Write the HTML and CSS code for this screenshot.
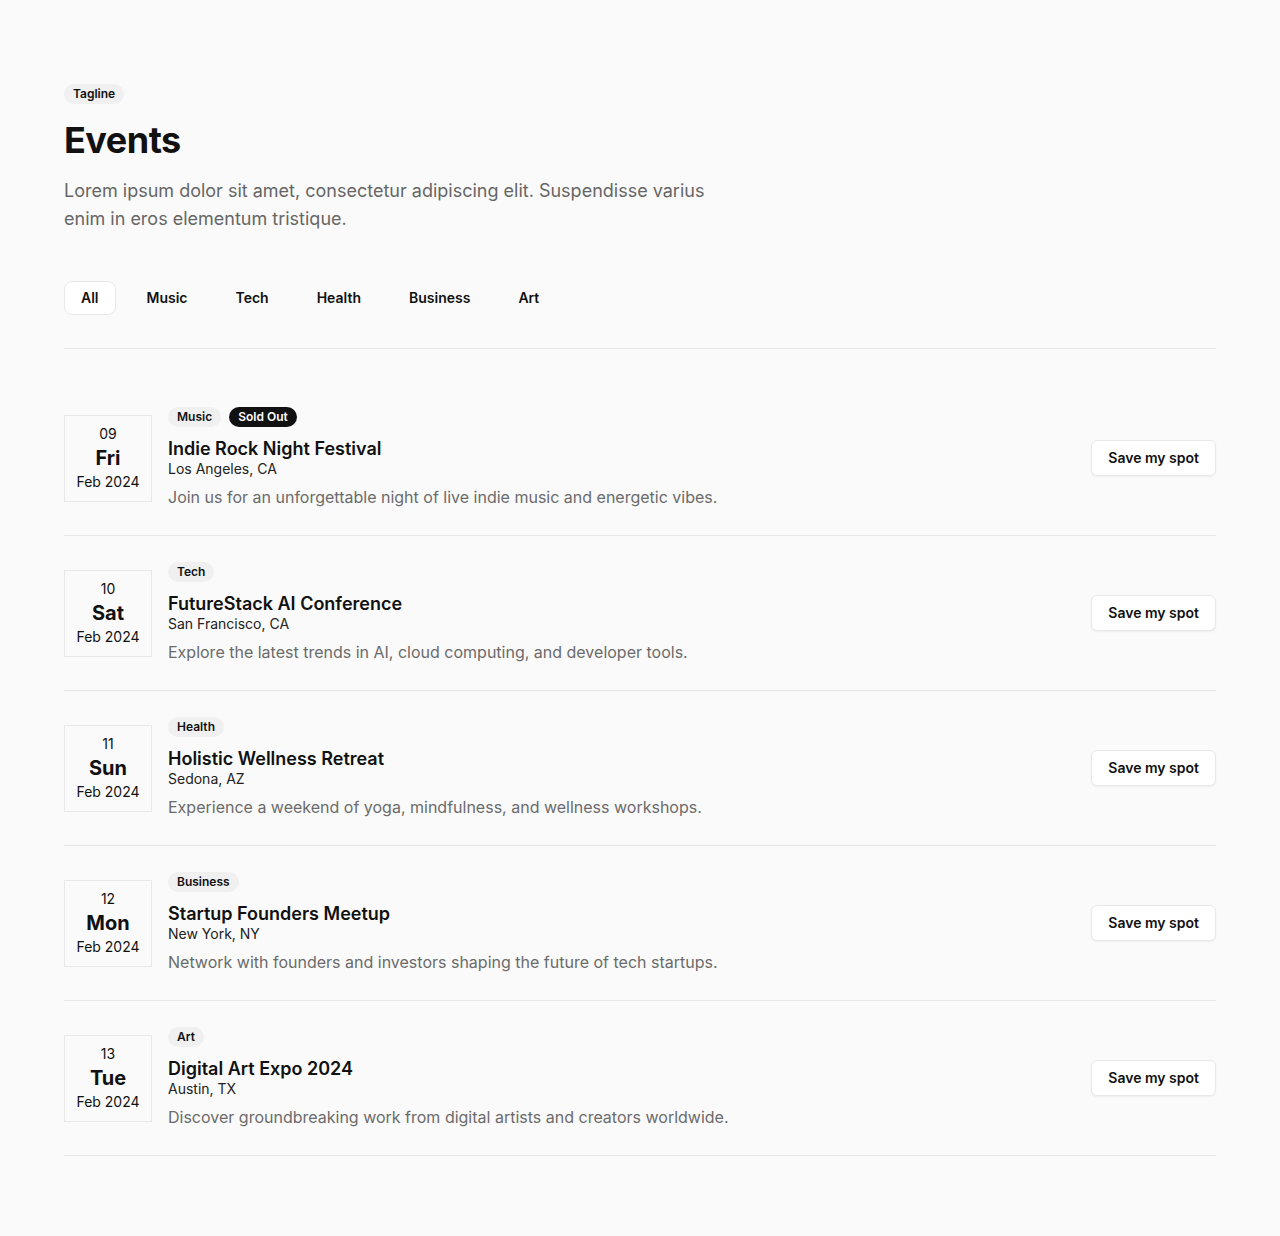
FILE: index.html
```html
<!DOCTYPE html>
<html>
    <head>
        <meta charset="utf-8">
        <link rel="stylesheet" href="styles.css">
    </head>
    <body>
        <section class="events">
            <header class="intro">
                <span class="tag">Tagline</span>
                <h1>Events</h1>
                <p>Lorem ipsum dolor sit amet, consectetur adipiscing elit. Suspendisse varius enim in eros elementum tristique.</p>
            </header>

            <nav class="tabs">
                <button class="tab active">All</button>
                <button class="tab">Music</button>
                <button class="tab">Tech</button>
                <button class="tab">Health</button>
                <button class="tab">Business</button>
                <button class="tab">Art</button>
            </nav>

            <div class="list">
                <div class="event">
                    <div class="date">
                        <span class="num">09</span>
                        <span class="day">Fri</span>
                        <span class="month">Feb 2024</span>
                    </div>
                    <div class="info">
                        <div class="badges">
                            <span class="tag">Music</span>
                            <span class="tag dark">Sold Out</span>
                        </div>
                        <h3>Indie Rock Night Festival</h3>
                        <div class="place">Los Angeles, CA</div>
                        <p>Join us for an unforgettable night of live indie music and energetic vibes.</p>
                    </div>
                    <button class="save">Save my spot</button>
                </div>

                <div class="event">
                    <div class="date">
                        <span class="num">10</span>
                        <span class="day">Sat</span>
                        <span class="month">Feb 2024</span>
                    </div>
                    <div class="info">
                        <div class="badges">
                            <span class="tag">Tech</span>
                        </div>
                        <h3>FutureStack AI Conference</h3>
                        <div class="place">San Francisco, CA</div>
                        <p>Explore the latest trends in AI, cloud computing, and developer tools.</p>
                    </div>
                    <button class="save">Save my spot</button>
                </div>

                <div class="event">
                    <div class="date">
                        <span class="num">11</span>
                        <span class="day">Sun</span>
                        <span class="month">Feb 2024</span>
                    </div>
                    <div class="info">
                        <div class="badges">
                            <span class="tag">Health</span>
                        </div>
                        <h3>Holistic Wellness Retreat</h3>
                        <div class="place">Sedona, AZ</div>
                        <p>Experience a weekend of yoga, mindfulness, and wellness workshops.</p>
                    </div>
                    <button class="save">Save my spot</button>
                </div>

                <div class="event">
                    <div class="date">
                        <span class="num">12</span>
                        <span class="day">Mon</span>
                        <span class="month">Feb 2024</span>
                    </div>
                    <div class="info">
                        <div class="badges">
                            <span class="tag">Business</span>
                        </div>
                        <h3>Startup Founders Meetup</h3>
                        <div class="place">New York, NY</div>
                        <p>Network with founders and investors shaping the future of tech startups.</p>
                    </div>
                    <button class="save">Save my spot</button>
                </div>

                <div class="event">
                    <div class="date">
                        <span class="num">13</span>
                        <span class="day">Tue</span>
                        <span class="month">Feb 2024</span>
                    </div>
                    <div class="info">
                        <div class="badges">
                            <span class="tag">Art</span>
                        </div>
                        <h3>Digital Art Expo 2024</h3>
                        <div class="place">Austin, TX</div>
                        <p>Discover groundbreaking work from digital artists and creators worldwide.</p>
                    </div>
                    <button class="save">Save my spot</button>
                </div>
            </div>
        </section>
    </body>
</html>
```

FILE: styles.css
```css
html, body {
    margin: 0;
    background-color: #FAFAFA;
    color: #111111;
    font-family: Inter, "Noto Sans", Arial, sans-serif;
}

.events {
    padding: 82px 64px 80px;
}

.intro {
    max-width: 660px;
}

.tag {
    display: inline-block;
    font-size: 12px;
    font-weight: 600;
    line-height: 16px;
    padding: 2px 9px;
    border-radius: 999rem;
    background-color: #F0F0F0;
    color: #111111;
}

.tag.dark {
    background-color: #111111;
    color: #FFFFFF;
}

.intro h1 {
    font-size: 36px;
    font-weight: 700;
    line-height: 44px;
    letter-spacing: -0.5px;
    margin: 14px 0 15px;
}

.intro p {
    font-size: 18px;
    line-height: 28px;
    color: #666666;
    margin: 0;
}

.tabs {
    display: flex;
    gap: 14px;
    margin-top: 48px;
    padding-bottom: 33px;
    border-bottom: 1px solid #E6E6E6;
}

.tab {
    font-family: inherit;
    font-size: 14px;
    font-weight: 600;
    color: #111111;
    background: transparent;
    border: 1px solid transparent;
    border-radius: 8px;
    padding: 8px 16px;
    line-height: 16px;
}

.tab.active {
    background-color: #FFFFFF;
    border-color: #E8E8E8;
}

.list {
    margin-top: 32px;
}

.event {
    display: flex;
    align-items: center;
    gap: 16px;
    padding: 26px 0;
    border-bottom: 1px solid #E6E6E6;
}

.date {
    width: 88px;
    box-sizing: border-box;
    border: 1px solid #E8E8E8;
    display: flex;
    flex-direction: column;
    align-items: center;
    padding: 8px 0 9px;
}

.date .num {
    font-size: 14px;
    line-height: 20px;
}

.date .day {
    font-size: 20px;
    font-weight: 700;
    line-height: 28px;
}

.date .month {
    font-size: 14px;
    line-height: 20px;
}

.info {
    flex: 1;
}

.badges {
    display: flex;
    gap: 8px;
    margin-bottom: 12px;
}

.info h3 {
    font-size: 18px;
    font-weight: 600;
    line-height: 20px;
    margin: 0;
}

.place {
    font-size: 14px;
    line-height: 20px;
    color: #222222;
}

.info p {
    font-size: 16px;
    line-height: 24px;
    color: #6B6B6B;
    margin: 6px 0 0;
}

.save {
    font-family: inherit;
    font-size: 14px;
    font-weight: 600;
    line-height: 16px;
    color: #111111;
    background-color: #FFFFFF;
    border: 1px solid #E8E8E8;
    border-radius: 6px;
    padding: 9px 16px;
    box-shadow: 0 1px 2px rgba(0,0,0,0.05);
    cursor: pointer;
}
```
